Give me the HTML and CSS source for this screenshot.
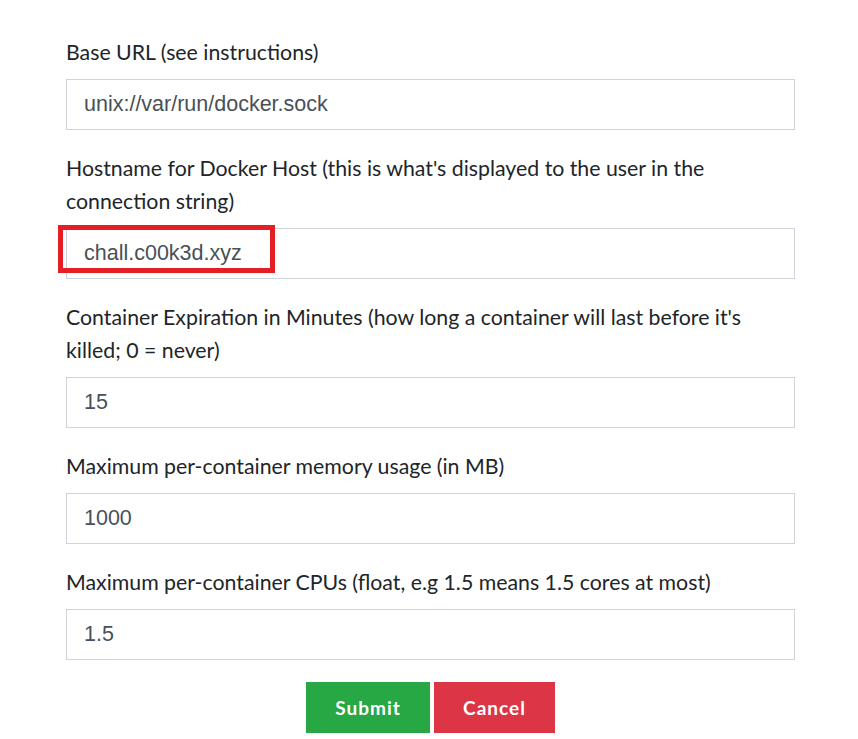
FILE: index.html
```html
<!DOCTYPE html>
<html>
<head>
<meta charset="utf-8">
<link rel="stylesheet" href="styles.css">
</head>
<body>
<form class="form">
  <div class="group">
    <label class="label">Base URL (see instructions)</label>
    <div class="input">unix://var/run/docker.sock</div>
  </div>
  <div class="group">
    <label class="label">Hostname for Docker Host (this is what's displayed to the user in the connection string)</label>
    <div class="input highlight-wrap"><span class="highlight"></span>chall.c00k3d.xyz</div>
  </div>
  <div class="group">
    <label class="label">Container Expiration in Minutes (how long a container will last before it's killed; 0 = never)</label>
    <div class="input">15</div>
  </div>
  <div class="group">
    <label class="label">Maximum per-container memory usage (in MB)</label>
    <div class="input">1000</div>
  </div>
  <div class="group">
    <label class="label">Maximum per-container CPUs (float, e.g 1.5 means 1.5 cores at most)</label>
    <div class="input">1.5</div>
  </div>
  <div class="actions">
    <button type="button" class="btn btn-submit">Submit</button>
    <button type="button" class="btn btn-cancel">Cancel</button>
  </div>
</form>
</body>
</html>
```
FILE: styles.css
```css
html, body {
  margin: 0;
  padding: 0;
  background: #ffffff;
}
body {
  font-family: Lato, "Liberation Sans", sans-serif;
  color: #212529;
}
.form {
  width: 729px;
  margin: 0 0 0 66px;
  padding-top: 36px;
}
.group {
  margin-bottom: 22px;
}
.label {
  display: block;
  font-size: 21.3px;
  line-height: 33px;
  margin-bottom: 10px;
}
.input {
  box-sizing: border-box;
  height: 51px;
  border: 1px solid #ced4da;
  padding: 0 17px;
  font-family: "Liberation Sans", Arial, sans-serif;
  font-size: 21.5px;
  line-height: 49px;
  color: #495057;
}
.highlight-wrap {
  position: relative;
}
.highlight {
  position: absolute;
  left: -9px;
  top: -4px;
  width: 217px;
  height: 48px;
  box-sizing: border-box;
  border: 5px solid #e31e24;
}
.actions {
  display: flex;
  justify-content: center;
  gap: 4px;
}
.btn {
  border: none;
  height: 51px;
  font-family: Lato, sans-serif;
  font-weight: 700;
  font-size: 19px;
  letter-spacing: 1px;
  color: #fff;
  cursor: pointer;
}
.btn-submit {
  background: #28a745;
  width: 124px;
}
.btn-cancel {
  background: #dc3545;
  width: 121px;
}
```
